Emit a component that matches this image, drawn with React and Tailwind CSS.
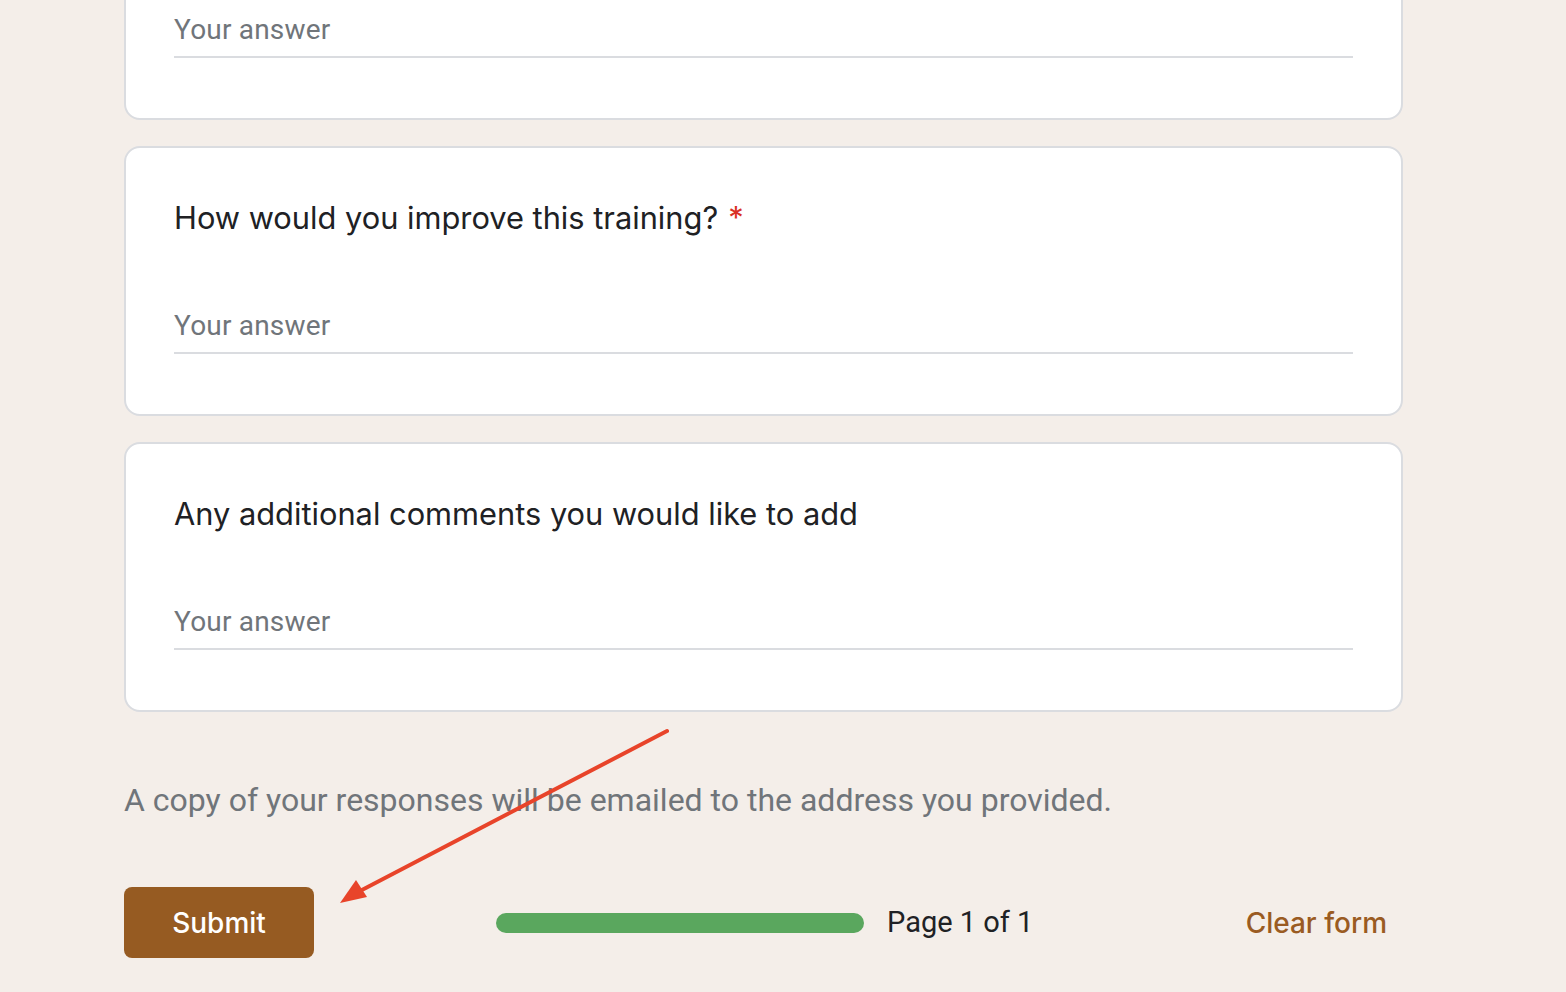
const questions = [
  { title: '', required: false },
  { title: 'How would you improve this training?', required: true },
  { title: 'Any additional comments you would like to add', required: false },
];

const QuestionCard = ({ title, required, className = '' }) => (
  <div className={`rounded-[16px] border-2 border-[#dadce0] bg-white pl-[48px] pr-[48px] pt-[50px] pb-[60px] ${className}`}>
    <div className="flex h-[40px] items-center text-[30.8px] leading-[40px] text-[#202124] font-['Inter',sans-serif]">
      <span>{title}</span>
      {required && <span className="ml-[10px] text-[#d93025]">*</span>}
    </div>
    <div className="mt-[70px] border-b-2 border-[#dadce0] pb-[8px]">
      <div className="h-[36px] text-[28px] leading-[36px] text-[#70757a] font-['Roboto',sans-serif] tracking-[0.2px]">
        Your answer
      </div>
    </div>
  </div>
);

export default function App() {
  return (
    <div className="relative h-[992px] w-full overflow-hidden bg-[#f4eee9]">
      <div className="ml-[124px] w-[1279px]">
        <div className="flex flex-col gap-[26px]">
          {questions.map((q, i) => (
            <QuestionCard key={i} {...q} className={i === 0 ? '-mt-[150px]' : ''} />
          ))}
        </div>

        <p className="mt-[68px] text-[32px] leading-[40px] text-[#70757a] font-['Roboto',sans-serif]">
          A copy of your responses will be emailed to the address you provided.
        </p>

        <div className="mt-[67px] flex items-center">
          <button className="h-[71px] w-[190px] rounded-[8px] bg-[#965b22] text-[28px] font-medium text-white font-['Inter',sans-serif]">
            Submit
          </button>
          <div className="ml-[182px] h-[20px] w-[368px] rounded-full bg-[#5aa75e]" />
          <span className="ml-[23px] text-[29px] text-[#202124] font-['Roboto',sans-serif]">Page 1 of 1</span>
          <button className="ml-auto mr-[16px] text-[28px] font-medium text-[#9a5b22] font-['Inter',sans-serif]">
            Clear form
          </button>
        </div>
      </div>

      <svg className="pointer-events-none absolute left-0 top-0" width="1566" height="992">
        <line x1="667" y1="731" x2="360" y2="891" stroke="#e8442a" strokeWidth="4" strokeLinecap="round" />
        <polygon points="340,903 356,880 367,897" fill="#e8442a" />
      </svg>
    </div>
  );
}
